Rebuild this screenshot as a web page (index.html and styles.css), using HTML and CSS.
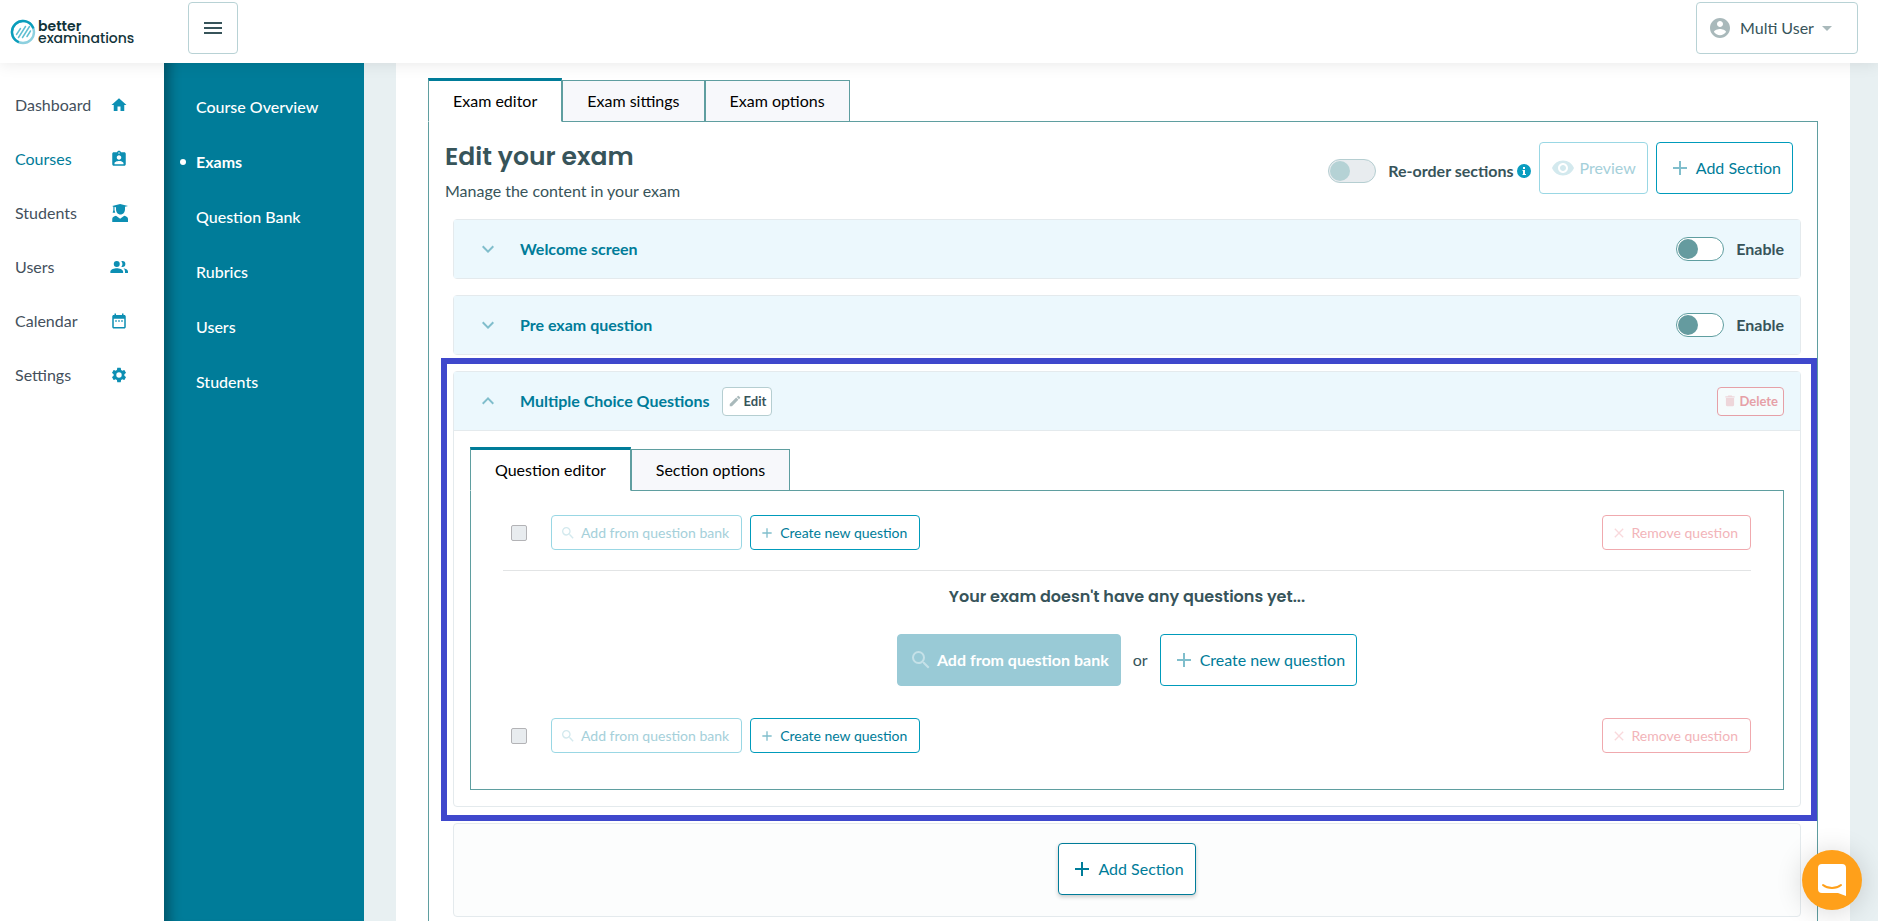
FILE: index.html
```html
<!DOCTYPE html>
<html lang="en">
<head>
    <meta charset="utf-8">
    <title>Better Examinations</title>
    <link rel="stylesheet" href="styles.css">
</head>
<body>
<!-- shared icons -->
<svg class="sprite" width="0" height="0" aria-hidden="true">
    <symbol id="i-plus" viewBox="0 0 24 24"><path d="M19 13h-6v6h-2v-6H5v-2h6V5h2v6h6v2z"/></symbol>
    <symbol id="i-search" viewBox="0 0 24 24"><path d="M15.5 14h-.79l-.28-.27A6.471 6.471 0 0 0 16 9.5 6.5 6.5 0 1 0 9.5 16c1.61 0 3.09-.59 4.23-1.57l.27.28v.79l5 4.99L20.49 19l-4.99-5zm-6 0C7.01 14 5 11.99 5 9.5S7.01 5 9.5 5 14 7.01 14 9.5 11.99 14 9.5 14z"/></symbol>
    <symbol id="i-close" viewBox="0 0 24 24"><path d="M19 6.41L17.59 5 12 10.59 6.41 5 5 6.41 10.59 12 5 17.59 6.41 19 12 13.41 17.59 19 19 17.59 13.41 12z"/></symbol>
    <symbol id="i-down" viewBox="0 0 24 24"><path d="M7.41 8.59L12 13.17l4.59-4.58L18 10l-6 6-6-6 1.41-1.41z"/></symbol>
    <symbol id="i-up" viewBox="0 0 24 24"><path d="M7.41 15.41L12 10.83l4.59 4.58L18 14l-6-6-6 6z"/></symbol>
</svg>

<header class="topbar">
    <a class="logo" href="#">
        <svg width="26" height="26" viewBox="0 0 26 26" stroke-linecap="round">
            <circle cx="13" cy="13" r="11" stroke="#8dd0df" stroke-width="2.4"/>
            <path d="M8 22.800A11 11 0 1 1 23 8.500" stroke="#0a9dbb" stroke-width="2.400"/>
            <path d="M6.500 15.500l4-6M8.500 18.500l7-11M12.500 18.500l7-11M17 17.500l3.500-5.500" stroke="#5fbfd2" stroke-width="1.500"/>
        </svg>
        <span class="logo-text"><strong>better</strong><br>examinations</span>
    </a>
    <button class="menu-btn" aria-label="Toggle menu">
        <svg width="24" height="24" viewBox="0 0 24 24"><path d="M3 18h18v-2H3v2zm0-5h18v-2H3v2zm0-7v2h18V6H3z"/></svg>
    </button>
    <button class="user-btn">
        <svg width="24" height="24" viewBox="0 0 24 24"><path d="M12 2C6.480 2 2 6.480 2 12s4.480 10 10 10 10-4.480 10-10S17.520 2 12 2zm0 3c1.660 0 3 1.340 3 3s-1.340 3-3 3-3-1.340-3-3 1.340-3 3-3zm0 14.200c-2.500 0-4.710-1.280-6-3.220.030-1.990 4-3.080 6-3.080 1.990 0 5.970 1.090 6 3.080-1.290 1.940-3.500 3.220-6 3.220z"/></svg>
        Multi User
        <span class="caret"></span>
    </button>
</header>

<div class="layout">
    <nav class="sidebar">
        <a href="#">Dashboard
            <svg width="18" height="18" viewBox="0 0 24 24"><path d="M10 20v-6h4v6h5v-8h3L12 3 2 12h3v8z"/></svg></a>
        <a href="#" class="current">Courses
            <svg width="18" height="18" viewBox="0 0 24 24"><path d="M19 3h-4.180C14.400 1.840 13.300 1 12 1s-2.400.840-2.820 2H5c-1.100 0-2 .9-2 2v14c0 1.100.9 2 2 2h14c1.100 0 2-.9 2-2V5c0-1.100-.9-2-2-2zm-7 0c.55 0 1 .45 1 1s-.45 1-1 1-1-.45-1-1 .45-1 1-1zm0 4c1.660 0 3 1.340 3 3s-1.340 3-3 3-3-1.340-3-3 1.340-3 3-3zm6 12H6v-1.400c0-2 4-3.100 6-3.100s6 1.100 6 3.100V19z"/></svg></a>
        <a href="#">Students
            <svg width="18" height="18" viewBox="0 0 24 24"><path d="M3 2.500L13.500 0 24 2.500l-4 1.300V7c0 4-2.500 7-6 7s-6-3-6-7V4.300L6 3.900V8l1 3.500H3.500l1-3.500V3.500zM3 24v-4c0-2.500 2-4 5-4.500l5.500 4 5.500-4c3 .5 5 2 5 4.500v4z"/></svg></a>
        <a href="#">Users
            <svg width="18" height="18" viewBox="0 0 24 24"><path d="M16.500 12a4 4 0 0 0 0-8c-.5 0-1 .1-1.400.25a6 6 0 0 1 0 7.500c.4.150.9.250 1.400.250zM9 12a4 4 0 1 0 0-8 4 4 0 0 0 0 8zm0 1.500c-3 0-8.500 1.500-8.500 4.500v2h17v-2c0-3-5.500-4.500-8.500-4.500zm8.800.2c1.200 1 2.200 2.300 2.200 4.300v2h4v-2c0-2.300-3.200-3.800-6.200-4.300z"/></svg></a>
        <a href="#">Calendar
            <svg width="18" height="18" viewBox="0 0 24 24"><path d="M9 11H7v2h2v-2zm4 0h-2v2h2v-2zm4 0h-2v2h2v-2zm2-7h-1V2h-2v2H8V2H6v2H5c-1.110 0-2 .9-2 2v14c0 1.100.890 2 2 2h14c1.100 0 2-.9 2-2V6c0-1.100-.9-2-2-2zm0 16H5V9h14v11z"/></svg></a>
        <a href="#">Settings
            <svg width="18" height="18" viewBox="0 0 24 24"><path d="M19.140 12.940c.040-.3.060-.610.060-.940 0-.320-.020-.640-.070-.940l2.030-1.580a.49.49 0 0 0 .120-.610l-1.920-3.320a.488.488 0 0 0-.590-.220l-2.390.960c-.5-.380-1.030-.7-1.620-.940l-.360-2.540a.484.484 0 0 0-.480-.410h-3.840c-.240 0-.430.170-.470.410l-.360 2.540c-.590.240-1.130.570-1.620.940l-2.390-.960c-.220-.080-.470 0-.590.220L2.740 8.870c-.120.210-.080.470.120.610l2.030 1.580c-.050.3-.090.630-.090.940s.020.640.070.940l-2.030 1.580a.49.49 0 0 0-.120.610l1.920 3.320c.120.220.370.290.590.220l2.390-.960c.5.380 1.030.7 1.620.940l.360 2.540c.050.240.240.410.480.410h3.840c.240 0 .440-.170.470-.410l.360-2.540c.590-.240 1.130-.560 1.620-.940l2.390.960c.220.080.470 0 .590-.220l1.920-3.320a.488.488 0 0 0-.120-.610l-2.010-1.580zM12 15.600A3.600 3.600 0 1 1 12 8.400a3.600 3.600 0 0 1 0 7.200z"/></svg></a>
    </nav>

    <nav class="subnav">
        <a href="#">Course Overview</a>
        <a href="#" class="current">Exams</a>
        <a href="#">Question Bank</a>
        <a href="#">Rubrics</a>
        <a href="#">Users</a>
        <a href="#">Students</a>
    </nav>

    <main class="main">
        <div class="page">
            <div class="tabs" role="tablist">
                <button class="tab active" role="tab" aria-selected="true">Exam editor</button>
                <button class="tab" role="tab">Exam sittings</button>
                <button class="tab" role="tab">Exam options</button>
            </div>
            <div class="tab-panel exam-panel">
                <div class="exam-head">
                    <div class="exam-title">
                        <h1>Edit your exam</h1>
                        <p>Manage the content in your exam</p>
                    </div>
                    <div class="exam-actions">
                        <label class="switch reorder"><input type="checkbox" role="switch" disabled>Re-order sections
                            <svg class="info" width="14" height="14" viewBox="0 0 14 14"><circle cx="7" cy="7" r="7" fill="#0a9dc0"/><path d="M6 3h2v2H6zM5.500 6H8v4h1v1H5.500v-1H6V7h-.5z" fill="#fff"/></svg>
                        </label>
                        <button class="btn" disabled>
                            <svg width="24" height="24" viewBox="0 0 24 24"><path d="M12 4.500C7 4.500 2.730 7.610 1 12c1.730 4.390 6 7.500 11 7.500s9.270-3.110 11-7.500c-1.730-4.390-6-7.500-11-7.500zM12 17c-2.760 0-5-2.240-5-5s2.240-5 5-5 5 2.240 5 5-2.240 5-5 5zm0-8c-1.660 0-3 1.340-3 3s1.340 3 3 3 3-1.340 3-3-1.340-3-3-3z"/></svg>Preview</button>
                        <button class="btn"><svg width="24" height="24"><use href="#i-plus"/></svg>Add Section</button>
                    </div>
                </div>

                <section class="card">
                    <div class="card-head">
                        <svg class="chevron" width="24" height="24"><use href="#i-down"/></svg>
                        <h2>Welcome screen</h2>
                        <label class="switch"><input type="checkbox" role="switch">Enable</label>
                    </div>
                </section>

                <section class="card">
                    <div class="card-head">
                        <svg class="chevron" width="24" height="24"><use href="#i-down"/></svg>
                        <h2>Pre exam question</h2>
                        <label class="switch"><input type="checkbox" role="switch">Enable</label>
                    </div>
                </section>

                <section class="card highlighted">
                    <div class="card-head open">
                        <svg class="chevron" width="24" height="24"><use href="#i-up"/></svg>
                        <h2>Multiple Choice Questions</h2>
                        <button class="btn-xs">
                            <svg width="14" height="14" viewBox="0 0 24 24"><path d="M3 17.250V21h3.750L17.810 9.940l-3.750-3.750L3 17.250zM20.710 7.040a1 1 0 0 0 0-1.410l-2.340-2.340a1 1 0 0 0-1.410 0l-1.830 1.830 3.750 3.750 1.830-1.830z"/></svg>Edit</button>
                        <button class="btn-xs delete" disabled>
                            <svg width="14" height="14" viewBox="0 0 24 24"><path d="M5 7v12c0 1.100.9 2 2 2h10c1.100 0 2-.9 2-2V7H5zM20 4h-4l-1-1.500H9L8 4H4v2h16V4z"/></svg>Delete</button>
                    </div>
                    <div class="card-body">
                        <div class="tabs" role="tablist">
                            <button class="tab active" role="tab" aria-selected="true">Question editor</button>
                            <button class="tab" role="tab">Section options</button>
                        </div>
                        <div class="tab-panel question-panel">
                            <div class="toolbar">
                                <input type="checkbox" class="check" aria-label="Select all questions" disabled>
                                <button class="btn btn-sm" disabled><svg width="16" height="16"><use href="#i-search"/></svg>Add from question bank</button>
                                <button class="btn btn-sm"><svg width="16" height="16"><use href="#i-plus"/></svg>Create new question</button>
                                <button class="btn btn-sm danger" disabled><svg width="16" height="16"><use href="#i-close"/></svg>Remove question</button>
                            </div>
                            <div class="empty">
                                <h3>Your exam doesn't have any questions yet...</h3>
                                <div class="empty-actions">
                                    <button class="btn filled" disabled><svg width="24" height="24"><use href="#i-search"/></svg>Add from question bank</button>
                                    <span>or</span>
                                    <button class="btn"><svg width="24" height="24"><use href="#i-plus"/></svg>Create new question</button>
                                </div>
                            </div>
                            <div class="toolbar">
                                <input type="checkbox" class="check" aria-label="Select all questions" disabled>
                                <button class="btn btn-sm" disabled><svg width="16" height="16"><use href="#i-search"/></svg>Add from question bank</button>
                                <button class="btn btn-sm"><svg width="16" height="16"><use href="#i-plus"/></svg>Create new question</button>
                                <button class="btn btn-sm danger" disabled><svg width="16" height="16"><use href="#i-close"/></svg>Remove question</button>
                            </div>
                        </div>
                    </div>
                </section>

                <section class="card add-card">
                    <button class="btn raised"><svg width="24" height="24"><use href="#i-plus"/></svg>Add Section</button>
                </section>
            </div>
        </div>
    </main>
</div>

<button class="chat" aria-label="Open chat">
    <svg width="28" height="32" viewBox="0 0 28 32"><path d="M4 0h20a4 4 0 0 1 4 4v28l-8-3H4a4 4 0 0 1-4-4V4a4 4 0 0 1 4-4z" fill="#fff"/><path d="M5 21c5 4 13 4 18 0" fill="none" stroke="#ffa01a" stroke-width="2" stroke-linecap="round"/></svg>
</button>
</body>
</html>
```

FILE: styles.css
```css
* {
    box-sizing: border-box;
}

body {
    margin: 0;
    height: 100vh;
    display: flex;
    flex-direction: column;
    overflow: hidden;
    font-family: Lato, "Liberation Sans", sans-serif;
    font-size: 16px;
    line-height: 24px;
    color: #37545a;
    background: #e8f0f2;
}

button {
    font: inherit;
    color: inherit;
    cursor: pointer;
}

a {
    color: inherit;
    text-decoration: none;
}

h1, h2, h3, p {
    margin: 0;
}

svg {
    fill: currentColor;
    flex-shrink: 0;
}

.sprite {
    position: absolute;
}

/* top bar */
.topbar {
    display: flex;
    align-items: flex-start;
    height: 63px;
    padding: 2px 20px 0 10px;
    background: #fff;
    box-shadow: 0 0 16px rgba(0, 0, 0, 0.1);
    position: relative;
    z-index: 2;
    flex-shrink: 0;
}

.logo {
    display: flex;
    align-items: center;
    gap: 2px;
    width: 178px;
    padding-top: 17px;
    color: #12343b;
}

.logo svg {
    fill: none;
}

.logo-text {
    font-family: Poppins, Inter, sans-serif;
    font-size: 14px;
    font-weight: 500;
    line-height: 12px;
}

.logo-text strong {
    font-weight: 600;
}

.menu-btn, .user-btn {
    display: flex;
    align-items: center;
    height: 52px;
    background: #fff;
    border: 1px solid #b8d2d5;
    border-radius: 4px;
}

.menu-btn {
    width: 50px;
    padding: 0;
    justify-content: center;
}

.user-btn {
    margin-left: auto;
    width: 162px;
    padding: 0 11px;
}

.user-btn svg {
    color: #a9b9bb;
    margin-right: 8px;
}

.caret {
    margin-left: 8px;
    border: 5px solid transparent;
    border-top-color: #a9b9bb;
    border-bottom: 0;
}

/* navigation */
.layout {
    display: flex;
    flex: 1;
    min-height: 0;
}

.sidebar {
    width: 164px;
    padding-top: 15px;
    background: #fff;
    color: #44505c;
    flex-shrink: 0;
}

.sidebar a {
    display: flex;
    align-items: center;
    justify-content: space-between;
    padding: 15px 36px 15px 15px;
}

.sidebar svg {
    color: #0d8fb3;
}

.sidebar .current {
    color: #007c99;
}

.subnav {
    width: 200px;
    padding-top: 16px;
    background: #007c99;
    box-shadow: inset 16px 0 12px -10px rgba(0, 0, 0, 0.3);
    color: #fff;
    flex-shrink: 0;
}

.subnav a {
    display: flex;
    align-items: center;
    height: 55px;
    padding-left: 32px;
    font-weight: 500;
}

.subnav .current {
    padding-left: 16px;
    gap: 10px;
    font-weight: 700;
}

.subnav .current::before {
    content: "";
    width: 6px;
    height: 6px;
    border-radius: 50%;
    background: #fff;
}

/* page */
.main {
    flex: 1;
    min-width: 0;
    padding: 0 28px 0 32px;
}

.page {
    min-height: 100%;
    padding: 15px 32px 0;
    background: #fff;
}

.tabs {
    display: flex;
    align-items: flex-end;
    position: relative;
    margin-bottom: -1px;
}

.tab {
    height: 42px;
    padding: 0 24px;
    border: 1px solid #5f9ea0;
    background: #f7f8fb;
    color: #000;
}

.tab.active {
    height: 44px;
    border-top: 3px solid #007c99;
    border-bottom-color: #fff;
    background: #fff;
}

.tab-panel {
    border: 1px solid #5f9ea0;
}

.exam-panel {
    padding: 20px 16px 16px 24px;
}

.exam-head {
    display: flex;
    justify-content: space-between;
    margin: 0 8px 16px -8px;
}

.exam-title h1 {
    font-family: Poppins, Inter, sans-serif;
    font-size: 25px;
    line-height: 30px;
    font-weight: 600;
}

.exam-title p {
    margin-top: 7px;
}

.exam-actions {
    display: flex;
    align-self: flex-start;
    gap: 8px;
}

.switch {
    display: flex;
    align-items: center;
    gap: 12px;
    font-weight: 700;
}

.switch input {
    appearance: none;
    width: 48px;
    height: 24px;
    margin: 0;
    padding: 1px;
    border: 1px solid #5f9ea0;
    border-radius: 12px;
    background: #fff;
}

.switch input::before {
    content: "";
    display: block;
    width: 20px;
    height: 20px;
    border-radius: 50%;
    background: #659b9f;
}

.switch input:disabled {
    border-color: #b5ced1;
    background: #e8ecef;
}

.switch input:disabled::before {
    background: #b5d2d5;
}

.reorder {
    padding-top: 6px;
}

.info {
    margin-left: -8px;
}

/* buttons */
.btn {
    display: flex;
    align-items: center;
    gap: 4px;
    height: 52px;
    padding: 0 11px;
    border: 1px solid #009bbb;
    border-radius: 4px;
    background: #fff;
    color: #007c99;
}

.btn svg {
    color: #80becc;
}

.btn:disabled {
    border-color: #99d7e4;
    color: #a5d0da;
    cursor: default;
}

.btn:disabled svg {
    color: #d3e9ee;
}

.btn-sm {
    gap: 5px;
    height: 35px;
    font-size: 14px;
    padding: 0 12px 0 8px;
}

.btn.danger:disabled {
    margin-left: auto;
    border-color: #f0a9ae;
    color: #f2b4b9;
}

.btn.danger:disabled svg {
    color: #f9d9dc;
}

.btn.filled:disabled {
    border-color: #99cad6;
    background: #99cad6;
    color: #fff;
    font-weight: 700;
}

.btn.filled:disabled svg {
    color: #c5e1e8;
}

.btn.raised {
    border-color: #007c99;
    box-shadow: 0 2px 4px rgba(0, 0, 0, 0.2);
}

.btn.raised svg {
    color: #007c99;
}

.btn-xs {
    display: flex;
    align-items: center;
    gap: 2px;
    height: 29px;
    margin-left: 12px;
    padding: 0 5px;
    border: 1px solid #b5ced1;
    border-radius: 4px;
    background: #fff;
    font-size: 13px;
    font-weight: 700;
}

.btn-xs svg {
    color: #a9b9bb;
}

.btn-xs.delete {
    margin-left: auto;
    border-color: #e6a0a7;
    background: #f5fbfc;
    color: #e6a0a7;
    cursor: default;
}

.btn-xs.delete svg {
    color: #eed6da;
}

/* section cards */
.card {
    position: relative;
    margin-bottom: 16px;
    border: 1px solid #e4eaed;
    border-radius: 4px;
}

.card-head {
    display: flex;
    align-items: center;
    height: 58px;
    padding: 0 16px 0 22px;
    background: #ecf8fd;
}

.card-head.open {
    height: 59px;
    border-bottom: 1px solid #e4eaed;
}

.card-head h2 {
    margin-left: 20px;
    font-size: 16px;
    line-height: 24px;
    font-weight: 700;
    color: #007c99;
}

.card-head .switch {
    margin-left: auto;
}

.chevron {
    color: #80becc;
}

.card-body {
    padding: 16px;
}

/* frame round the section being explained */
.highlighted::after {
    content: "";
    position: absolute;
    top: -14px;
    right: -17px;
    bottom: -15px;
    left: -13px;
    border: 6px solid #3f48cc;
    pointer-events: none;
}

.question-panel {
    padding: 24px 32px 36px;
}

.toolbar {
    display: flex;
    align-items: center;
    gap: 8px;
}

.check {
    appearance: none;
    width: 16px;
    height: 16px;
    margin: 0 16px 0 8px;
    border: 1px solid #b3b3b6;
    border-radius: 2px;
    background: #e8ecef;
}

.empty {
    display: flex;
    flex-direction: column;
    align-items: center;
    margin: 20px 0 32px;
    padding-top: 14px;
    border-top: 1px solid #e2e4e5;
}

.empty h3 {
    font-family: Poppins, Inter, sans-serif;
    font-size: 16px;
    line-height: 24px;
    font-weight: 600;
}

.empty-actions {
    display: flex;
    align-items: center;
    gap: 12px;
    margin-top: 25px;
}

.add-card {
    display: flex;
    justify-content: center;
    padding: 19px 0 21px;
    background: #fcfdfd;
}

/* chat launcher */
.chat {
    position: fixed;
    right: 16px;
    bottom: 11px;
    z-index: 3;
    display: flex;
    align-items: center;
    justify-content: center;
    width: 60px;
    height: 60px;
    padding: 0;
    border: 0;
    border-radius: 50%;
    background: #ffa01a;
    box-shadow: 0 2px 28px rgba(0, 0, 0, 0.16);
}
```
